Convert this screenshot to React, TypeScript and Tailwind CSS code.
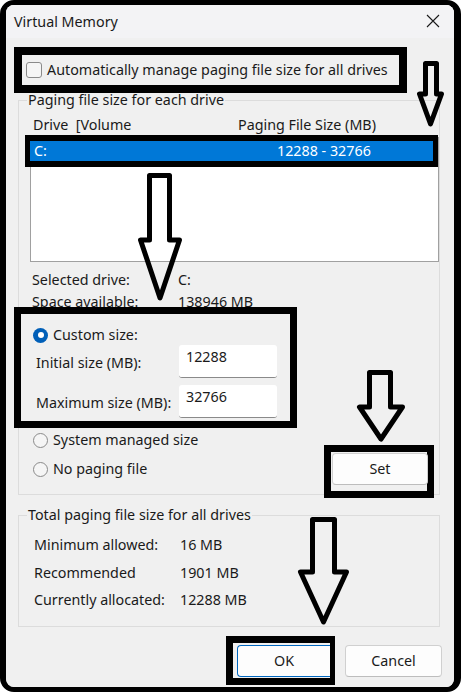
import React from 'react'

const font = "font-['Noto_Sans','Liberation_Sans',sans-serif]"

const arrows = [
  { x1: 425.5, x2: 436.5, top: 63.5, hx1: 419.5, hx2: 441.5, hy: 94, tip: 124 },
  { x1: 149.5, x2: 169.5, top: 175.5, hx1: 140.5, hx2: 179.5, hy: 240, tip: 298 },
  { x1: 369.5, x2: 390.5, top: 372.5, hx1: 359.5, hx2: 402.5, hy: 407, tip: 439 },
  { x1: 312.5, x2: 334.5, top: 519.5, hx1: 300.5, hx2: 346.5, hy: 572, tip: 622 },
]

function arrowPath(a: (typeof arrows)[number]) {
  const cx = (a.hx1 + a.hx2) / 2
  return `M${a.x1} ${a.top} H${a.x2} V${a.hy} H${a.hx2} L${cx} ${a.tip} L${a.hx1} ${a.hy} H${a.x1} Z`
}

function Radio({ checked }: { checked?: boolean }) {
  if (checked) {
    return (
      <span className="flex h-[15px] w-[15px] shrink-0 items-center justify-center rounded-full bg-[#005fb8]">
        <span className="h-[6px] w-[6px] rounded-full bg-white" />
      </span>
    )
  }
  return <span className="h-[15px] w-[15px] shrink-0 rounded-full border border-[#8a8a8a] bg-[#f5f5f5]" />
}

function SizeInput({ value }: { value: string }) {
  return (
    <div className="h-[33px] w-[98px] rounded-[3px] border-b border-[#8a8a8a] bg-white pl-[7px] pt-[2px] leading-[20px]">
      {value}
    </div>
  )
}

export default function App() {
  return (
    <div className={`relative h-[692px] w-[461px] overflow-hidden bg-white text-[14.3px] text-[#1a1a1a] ${font}`}>
      <div className="h-full rounded-[14px] border-b-[5px] border-l-[6px] border-r-[7px] border-t-[5px] border-black">
        <div className="flex h-full flex-col overflow-hidden rounded-[8px] bg-[#f0f0f0]">
          {/* title bar */}
          <div className="flex h-[33px] shrink-0 items-center justify-between bg-[#f3f3f5] pl-[8px] pr-[14px]">
            <span>Virtual Memory</span>
            <svg width="14" height="14" viewBox="0 0 14 14" className="mt-[-2px]">
              <path d="M1 1 L13 13 M13 1 L1 13" stroke="#1a1a1a" strokeWidth="1.1" />
            </svg>
          </div>

          <div className="flex flex-col">
            {/* auto manage checkbox */}
            <div className="ml-[8px] mt-[9px] flex h-[46px] w-[393px] items-center border-[8px] border-black">
              <span className="ml-[4px] h-[16px] w-[16px] rounded-[3px] border border-[#8a8a8a] bg-[#f5f5f5]" />
              <span className="ml-[5px] leading-[20px]">Automatically manage paging file size for all drives</span>
            </div>

            {/* paging file size for each drive */}
            <fieldset className="relative ml-[12px] mt-[-3px] w-[422px] border border-[#dcdcdc]">
              <legend className="ml-[8px] px-[1px] leading-[20px]">Paging file size for each drive</legend>

              <div className="mt-[5px] flex h-[20px] items-center pl-[14px] leading-[20px]">
                <span className="w-[205px]">Drive&nbsp; [Volume</span>
                <span>Paging File Size (MB)</span>
              </div>

              <div className="ml-[11px] mt-[2px] h-[125px] w-[409px] border border-[#a0a0a0] bg-white">
                <div className="relative -ml-[6px] -mt-[3px] flex h-[32px] w-[413px] items-center border-x-[5px] border-y-[6px] border-black bg-[#0078d7] text-white">
                  <span className="w-[247px] pl-[4px]">C:</span>
                  <span>12288 - 32766</span>
                </div>
              </div>

              <div className="mt-[8px] flex h-[20px] items-center pl-[13px]">
                <span className="w-[146px]">Selected drive:</span>
                <span>C:</span>
              </div>
              <div className="mt-[2px] flex h-[20px] items-center pl-[13px]">
                <span className="w-[146px]">Space available:</span>
                <span>138946 MB</span>
              </div>

              {/* custom size */}
              <div className="relative z-10 -ml-[5px] -mt-[5px] h-[121px] w-[283px] border-[7px] border-black">
                <div className="mt-[11px] flex h-[20px] items-center gap-[5px] pl-[12px]">
                  <Radio checked />
                  <span>Custom size:</span>
                </div>
                <div className="flex items-center pl-[15px]">
                  <span className="mt-[3px] w-[143px]">Initial size (MB):</span>
                  <SizeInput value="12288" />
                </div>
                <div className="mt-[7px] flex items-center pl-[15px]">
                  <span className="mt-[3px] w-[143px]">Maximum size (MB):</span>
                  <SizeInput value="32766" />
                </div>
              </div>

              <div className="mt-[2px] flex h-[20px] items-center gap-[5px] pl-[14px]">
                <Radio />
                <span>System managed size</span>
              </div>

              <div className="-mb-[4px] -mt-[5px] flex items-start pl-[14px]">
                <div className="mt-[14px] flex h-[20px] items-center gap-[5px]">
                  <Radio />
                  <span>No paging file</span>
                </div>
                <div className="relative z-10 ml-auto mr-[5px] h-[53px] w-[110px] border-[7px] border-black">
                  <div className="ml-[1px] mt-[1px] flex h-[32px] w-[96px] items-center justify-center rounded-[4px] border border-[#d0d0d0] border-b-[#bdbdbd] bg-[#fdfdfd]">
                    Set
                  </div>
                </div>
              </div>
            </fieldset>

            {/* total paging */}
            <fieldset className="ml-[12px] mt-[10px] w-[422px] border border-[#dcdcdc] pb-[16px]">
              <legend className="ml-[8px] px-[1px] leading-[20px]">Total paging file size for all drives</legend>
              <div className="mt-[10px] flex h-[20px] items-center pl-[15px]">
                <span className="w-[146px]">Minimum allowed:</span>
                <span>16 MB</span>
              </div>
              <div className="mt-[8px] flex h-[20px] items-center pl-[15px]">
                <span className="w-[146px]">Recommended</span>
                <span>1901 MB</span>
              </div>
              <div className="mt-[7px] flex h-[20px] items-center pl-[15px]">
                <span className="w-[146px]">Currently allocated:</span>
                <span>12288 MB</span>
              </div>
            </fieldset>

            {/* buttons */}
            <div className="mt-[9px] flex items-start justify-end gap-[10px] pr-[12px]">
              <div className="h-[49px] w-[109px] border-b-[7px] border-l-[7px] border-r-[5px] border-t-[7px] border-black">
                <div className="ml-[4px] mt-[2px] flex h-[32px] w-[93px] items-center justify-center rounded-l-[4px] border border-r-0 border-[#0067c0] bg-[#fdfdfd]">
                  OK
                </div>
              </div>
              <div className="mt-[9px] flex h-[32px] w-[97px] items-center justify-center rounded-[4px] border border-[#d0d0d0] border-b-[#bdbdbd] bg-[#fdfdfd]">
                Cancel
              </div>
            </div>
          </div>
        </div>
      </div>

      <svg className="pointer-events-none absolute left-0 top-0 z-20" width="461" height="692" viewBox="0 0 461 692">
        {arrows.map((a, i) => (
          <path key={i} d={arrowPath(a)} fill="none" stroke="black" strokeWidth="5" strokeLinejoin="round" />
        ))}
      </svg>
    </div>
  )
}
